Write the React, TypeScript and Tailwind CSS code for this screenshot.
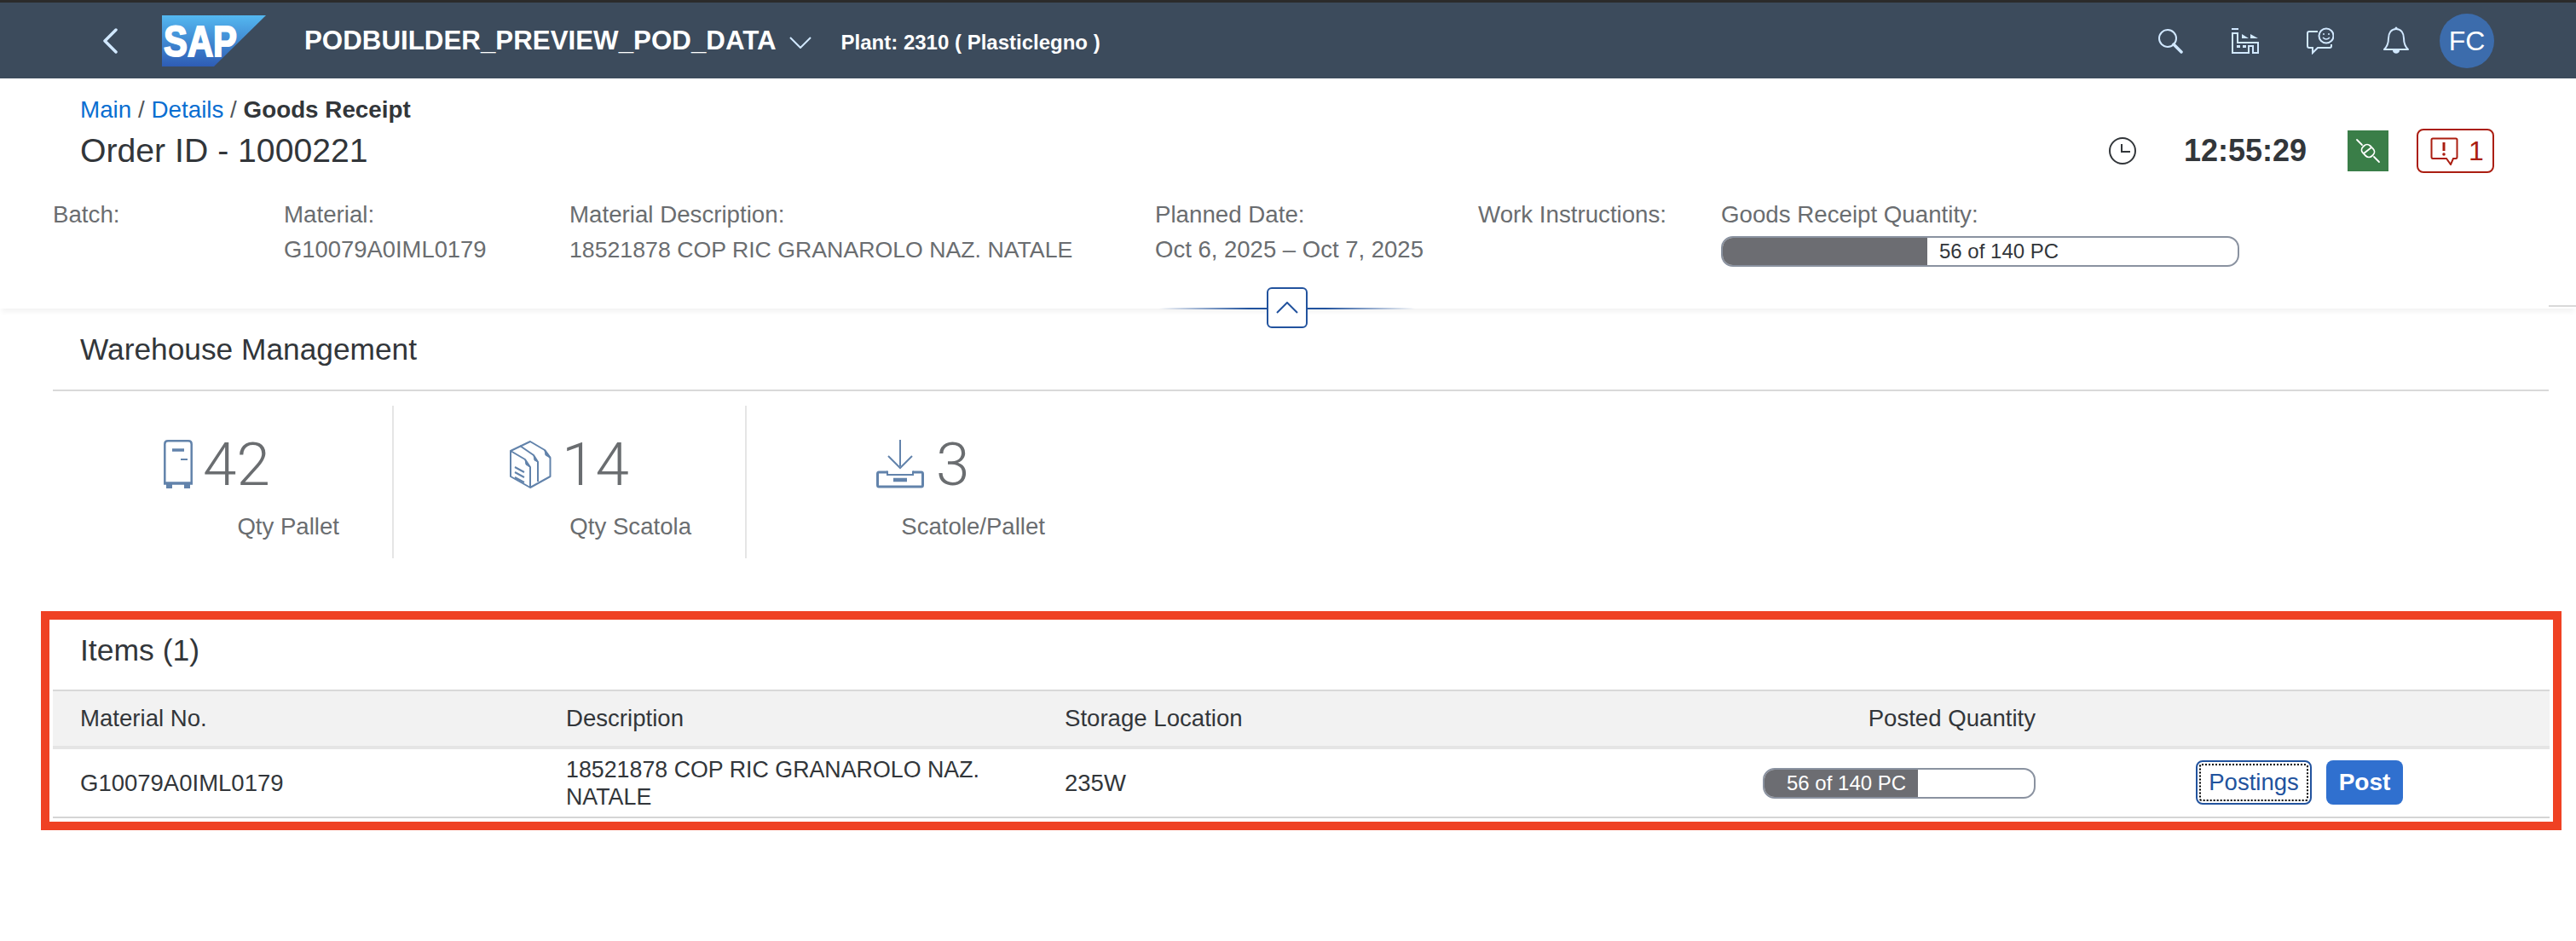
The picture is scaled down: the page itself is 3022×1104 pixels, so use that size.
import React from "react";

const headerFields = [
  { label: "Batch:", value: "", width: "w-[271px]", valueSize: "text-[27.4px]" },
  { label: "Material:", value: "G10079A0IML0179", width: "w-[335px]", valueSize: "text-[27.4px]" },
  { label: "Material Description:", value: "18521878 COP RIC GRANAROLO NAZ. NATALE", width: "w-[687px]", valueSize: "text-[26.7px]" },
  { label: "Planned Date:", value: "Oct 6, 2025 – Oct 7, 2025", width: "w-[379px]", valueSize: "text-[27.5px]" },
  { label: "Work Instructions:", value: "", width: "w-[285px]", valueSize: "text-[27.4px]" },
];

function BackIcon() {
  return (
    <svg width="20" height="30" viewBox="0 0 20 30" fill="none" stroke="#d1e8ff" strokeWidth="3.5" strokeLinecap="round" strokeLinejoin="round">
      <path d="M16 2 L3 15 L16 28" />
    </svg>
  );
}

function SapLogo() {
  return (
    <svg width="122" height="60" viewBox="0 0 122 60">
      <defs>
        <linearGradient id="sapGrad" x1="0" y1="0" x2="0" y2="1">
          <stop offset="0" stopColor="#54b8f0" />
          <stop offset="1" stopColor="#2e5cb5" />
        </linearGradient>
      </defs>
      <path d="M0 0 H122 L61 60 H0 Z" fill="url(#sapGrad)" />
      <text x="2" y="48" fontFamily="Liberation Sans" fontWeight="700" fontSize="50" fill="#fff" stroke="#fff" strokeWidth="2" textLength="86" lengthAdjust="spacingAndGlyphs">
        SAP
      </text>
    </svg>
  );
}

function SearchIcon() {
  return (
    <svg width="30" height="30" viewBox="0 0 30 30" fill="none" stroke="#d1e8ff">
      <circle cx="12" cy="12" r="10" strokeWidth="2" />
      <path d="M19 19 L28 28" strokeWidth="3.5" strokeLinecap="round" />
    </svg>
  );
}

function FactoryIcon() {
  return (
    <svg width="32" height="30" viewBox="0 0 32 30" fill="none" stroke="#d1e8ff" strokeWidth="2">
      <path d="M0 1 H8" />
      <path d="M1 6 H7 V17 H31 V29 H25 V21 H20 V29 H1 Z" />
      <path d="M12 7 L20 12 H12 Z M22 7 L31 12 H22 Z" fill="#d1e8ff" stroke="none" />
      <path d="M6 20 H10 V23 H6 Z M13 20 H17 V23 H13 Z" fill="#d1e8ff" stroke="none" />
    </svg>
  );
}

function FeedbackIcon() {
  return (
    <svg width="32" height="32" viewBox="0 0 32 32" fill="none" stroke="#d1e8ff" strokeWidth="2">
      <path d="M13 5 H3 Q1 5 1 7 V22 Q1 24 3 24 H7 V30 L13 24 H27 Q29 24 29 22 V20" />
      <circle cx="23" cy="10" r="8.5" />
      <path d="M19 12 Q23 16 27 12" strokeWidth="1.5" />
      <circle cx="20" cy="8" r="1" fill="#d1e8ff" stroke="none" />
      <circle cx="26" cy="8" r="1" fill="#d1e8ff" stroke="none" />
    </svg>
  );
}

function BellIcon() {
  return (
    <svg width="30" height="33" viewBox="0 0 30 33" fill="none" stroke="#d1e8ff" strokeWidth="2">
      <path d="M15 3 C9 3 6 8 6 14 C6 20 4 24 1 27 H29 C26 24 24 20 24 14 C24 8 21 3 15 3 Z" strokeLinejoin="round" />
      <path d="M11 28 H19 C19 33 11 33 11 28 Z" fill="#d1e8ff" stroke="none" />
      <circle cx="15" cy="2" r="1.5" fill="#d1e8ff" stroke="none" />
    </svg>
  );
}

function ClockIcon() {
  return (
    <svg width="32" height="32" viewBox="0 0 32 32" fill="none" stroke="#32363a" strokeWidth="2">
      <circle cx="16" cy="16" r="15" />
      <path d="M15 8 V17 H25" />
    </svg>
  );
}

function PlugIcon() {
  return (
    <svg width="32" height="32" viewBox="0 0 32 32" fill="none" stroke="#fff" strokeWidth="1.8">
      <path d="M3 3 L9 9 M23 23 L29 29" strokeLinecap="round" />
      <rect x="8.5" y="10" width="15" height="12" rx="5" transform="rotate(45 16 16)" />
      <path d="M11 19 L20 12" />
    </svg>
  );
}

function MessageIcon() {
  return (
    <svg width="33" height="33" viewBox="0 0 33 33" fill="none" stroke="#ab1e11" strokeWidth="2">
      <path d="M3 1.5 H30 Q31.5 1.5 31.5 3 V23 Q31.5 25 30 25 H27 L24 32 L19 25 H3 Q1.5 25 1.5 23 V3 Q1.5 1.5 3 1.5 Z" />
      <path d="M16 6 V16" strokeWidth="3" />
      <circle cx="16" cy="20" r="1.8" fill="#ab1e11" stroke="none" />
    </svg>
  );
}

function PalletIcon() {
  return (
    <svg width="34" height="57" viewBox="0 0 34 57" fill="none" stroke="#6283ab" strokeWidth="2.5">
      <path d="M1.3 50 V5 Q1.3 1.3 5 1.3 H29 Q32.7 1.3 32.7 5 V50" />
      <path d="M10 12 H24" strokeWidth="3.5" />
      <path d="M20 23 H28" strokeWidth="2" />
      <path d="M0 51 H34" strokeWidth="3.5" />
      <path d="M6.5 51 V57 M27.5 51 V57" strokeWidth="7" />
    </svg>
  );
}

function BoxIcon() {
  return (
    <svg width="49" height="56" viewBox="0 0 49 56" fill="none" stroke="#6283ab" strokeWidth="2" strokeLinejoin="round">
      <path d="M24 1 L1 12 V42 L24 55 L47.5 42 V20 L41 11 Z" />
      <path d="M1 12 L18 22 L24 31 V55" />
      <path d="M12 6 L28 17 L33 25 V48" />
      <path d="M41 11 L47.5 20" />
      <path d="M18 22 L23.5 31 L19 28 Z M28 17 L33 25 L29 23 Z M41 11 L47 20 L42 17 Z" fill="#6283ab" strokeWidth="1" />
      <path d="M6 31 L17 37 M6 37 L17 43 M6 43 L17 49" />
    </svg>
  );
}

function TrayIcon() {
  return (
    <svg width="56" height="57" viewBox="0 0 56 57" fill="none" stroke="#6283ab" strokeWidth="2">
      <path d="M28 0 V31 M14 19 L28 33 L42 19" />
      <path d="M13 38 H3 Q1.5 38 1.5 40 V53 Q1.5 55 3 55 H53 Q54.5 55 54.5 53 V40 Q54.5 38 53 38 H43" strokeWidth="3" />
      <path d="M13 36.5 V41 H43 V36.5" strokeWidth="2" />
      <path d="M20 47 H36" strokeWidth="4.5" />
    </svg>
  );
}

function Tile({
  icon,
  value,
  label,
  width,
  inset,
  inner,
  gap,
  divider,
}: {
  icon: React.ReactNode;
  value: string;
  label: string;
  width: string;
  inset: string;
  inner: string;
  gap: string;
  divider?: boolean;
}) {
  return (
    <div className={`${width} ${inset} h-[179px] pt-[40px] ${divider ? "border-r-2 border-[#e5e5e5]" : ""}`}>
      <div className={`${inner} flex flex-col`}>
        <div className={`flex items-center ${gap} h-[57px]`}>
          {icon}
          <span className="font-['Roboto',sans-serif] font-light text-[71px] leading-[57px] text-[#6a6d70]">{value}</span>
        </div>
        <span className="mt-[27px] text-right text-[27.6px] leading-[36px] text-[#6a6d70]">{label}</span>
      </div>
    </div>
  );
}

export default function App() {
  return (
    <div className="w-[3022px] h-[1104px] overflow-hidden bg-white font-['Liberation_Sans',sans-serif] text-[#32363a]">
      {/* Shell bar */}
      <div className="h-[92px] border-t-[3px] border-[#2b2b2b] bg-[#3c4b5c] flex items-center pl-[120px] pr-[96px]">
        <BackIcon />
        <div className="ml-[50px]">
          <SapLogo />
        </div>
        <span className="ml-[45px] text-[31.3px] font-bold text-white leading-[40px]">PODBUILDER_PREVIEW_POD_DATA</span>
        <svg className="ml-[15px] mt-[4px]" width="26" height="14" viewBox="0 0 26 14" fill="none" stroke="#d1e8ff" strokeWidth="2">
          <path d="M1 1 L13 13 L25 1" />
        </svg>
        <span className="ml-[35px] mt-[4px] text-[24px] font-bold text-white leading-[32px]">Plant: 2310 ( Plasticlegno )</span>
        <div className="ml-auto flex items-center">
          <SearchIcon />
          <div className="ml-[57px]"><FactoryIcon /></div>
          <div className="ml-[56px]"><FeedbackIcon /></div>
          <div className="ml-[58px]"><BellIcon /></div>
          <div className="ml-[36px] size-[64px] rounded-full bg-[#3c6cac] flex items-center justify-center text-[32px] text-white">FC</div>
        </div>
      </div>

      {/* Object header */}
      <div className="relative h-[270px] pt-[20px] shadow-[0_6px_6px_-2px_rgba(0,0,0,0.05)]">
        <div className="pl-[94px] text-[27.8px] leading-[36px] -mt-[1px]">
          <span className="text-[#0a6ed1]">Main</span>
          <span className="text-[#515559]"> / </span>
          <span className="text-[#0a6ed1]">Details</span>
          <span className="text-[#515559]"> / </span>
          <span className="font-bold">Goods Receipt</span>
        </div>
        <div className="mt-[4px] pl-[94px] pr-[96px] h-[52px] flex items-center">
          <span className="text-[39.2px] leading-[52px]">Order ID - 1000221</span>
          <div className="ml-auto flex items-center">
            <ClockIcon />
            <span className="ml-[56px] text-[36px] font-bold leading-[48px]">12:55:29</span>
            <div className="ml-[48px] size-[48px] bg-[#3a7e48] flex items-center justify-center">
              <PlugIcon />
            </div>
            <div className="ml-[33px] w-[91px] h-[52px] rounded-[8px] border-2 border-[#ab1e11] flex items-center pl-[14px] gap-[12px]">
              <MessageIcon />
              <span className="text-[32px] text-[#ab1e11]">1</span>
            </div>
          </div>
        </div>
        <div className="mt-[33px] pl-[62px] flex text-[27.7px] leading-[32px] text-[#6a6d70]">
          {headerFields.map((f) => (
            <div key={f.label} className={f.width}>
              <div>{f.label}</div>
              <div className={`mt-[9px] ${f.valueSize}`}>{f.value}</div>
            </div>
          ))}
          <div>
            <div>Goods Receipt Quantity:</div>
            <div className="mt-[9px] w-[608px] h-[36px] rounded-[14px] border-2 border-[#8a92a0] bg-white overflow-hidden flex items-center">
              <div className="h-[36px] -ml-[2px] w-[242px] bg-[#6c6d72]" />
              <span className="ml-[14px] text-[24px] text-[#32363a]">56 of 140 PC</span>
            </div>
          </div>
        </div>

        {/* Collapse handle */}
        <div className="absolute left-[1360px] top-[269px] w-[300px] h-[2px] bg-[linear-gradient(90deg,transparent,#22539e_35%,#22539e_65%,transparent)]" />
        <div className="absolute left-[1486px] top-[245px] size-[48px] rounded-[6px] border-2 border-[#22539e] bg-white flex items-center justify-center">
          <svg width="26" height="14" viewBox="0 0 26 14" fill="none" stroke="#22539e" strokeWidth="2">
            <path d="M1 13 L13 1 L25 13" />
          </svg>
        </div>
        <div className="absolute right-0 top-[266px] w-[32px] h-[2px] bg-[#d9d9d9]" />
      </div>

      {/* Warehouse section */}
      <div className="pt-[28px] h-[40px] box-content pl-[94px] text-[35.3px] leading-[40px]">Warehouse Management</div>
      <div className="mt-[27px] ml-[62px] w-[2928px] h-[2px] bg-[#d9d9d9]" />
      <div className="mt-[17px] ml-[62px] flex">
        <Tile
          icon={<PalletIcon />}
          value="42"
          label="Qty Pallet"
          width="w-[400px]"
          inset="pl-[130px]"
          inner="w-[206px]"
          gap="gap-[12px]"
          divider
        />
        <Tile
          icon={<BoxIcon />}
          value="14"
          label="Qty Scatola"
          width="w-[414px]"
          inset="pl-[136px]"
          inner="w-[213px]"
          gap="gap-[12px]"
          divider
        />
        <Tile
          icon={<TrayIcon />}
          value="3"
          label="Scatole/Pallet"
          width="w-[400px]"
          inset="pl-[152px]"
          inner="w-[198px]"
          gap="gap-[14px]"
        />
      </div>

      {/* Items table */}
      <div className="mt-[62px] ml-[48px] w-[2957px] h-[257px] border-[10px] border-[#ef4123] px-[4px]">
        <div className="h-[82px] pt-[16px] pl-[32px] text-[35.5px] leading-[40px]">Items (1)</div>
        <div className="grid grid-cols-[602px_585px_819px_320px_1fr] h-[70px] items-center border-t-2 border-b-4 border-t-[#d9d9d9] border-b-[#e5e5e5] bg-[#f2f2f2] text-[27.6px]">
          <span className="pl-[32px]">Material No.</span>
          <span>Description</span>
          <span>Storage Location</span>
          <span className="text-right">Posted Quantity</span>
          <span />
        </div>
        <div className="grid grid-cols-[602px_585px_819px_320px_1fr] h-[81px] items-center border-b-2 border-[#d5d5d5] text-[27.5px]">
          <span className="pl-[32px]">G10079A0IML0179</span>
          <span className="text-[26.8px] leading-[32px]">18521878 COP RIC GRANAROLO NAZ. NATALE</span>
          <span>235W</span>
          <div className="h-[36px] rounded-[14px] border-2 border-[#8a92a0] overflow-hidden flex items-center">
            <div className="h-[36px] -ml-[2px] w-[182px] bg-[#6c6d72] pl-[28px] text-[24px] leading-[36px] text-white whitespace-nowrap">56 of 140 PC</div>
          </div>
          <div className="pl-[188px] flex gap-[17px] -mt-[2px]">
            <div className="w-[136px] h-[52px] p-[2px] rounded-[8px] border-2 border-[#22539e]">
              <div className="size-full rounded-[3px] border-2 border-dotted border-black flex items-center justify-center text-[27.5px] text-[#22539e]">Postings</div>
            </div>
            <div className="w-[90px] h-[52px] rounded-[8px] bg-[#3070cf] flex items-center justify-center text-[28px] font-bold text-white">Post</div>
          </div>
        </div>
      </div>
    </div>
  );
}
